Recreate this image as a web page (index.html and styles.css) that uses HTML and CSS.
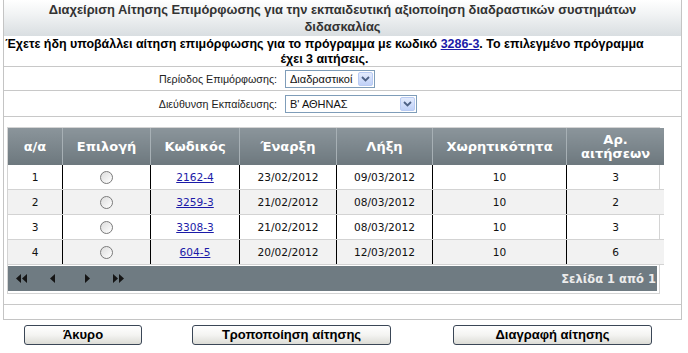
FILE: index.html
```html
<!DOCTYPE html>
<html lang="el">
<head>
<meta charset="utf-8">
<title>Διαχείριση Αίτησης Επιμόρφωσης</title>
<link rel="stylesheet" href="styles.css">
</head>
<body>
<div class="panel">
  <div class="title">Διαχείριση Αίτησης Επιμόρφωσης για την εκπαιδευτική αξιοποίηση διαδραστικών συστημάτων<br>διδασκαλίας</div>
  <div class="msg">Έχετε ήδη υποβάλλει αίτηση επιμόρφωσης για το πρόγραμμα με κωδικό <a href="#" class="link">3286-3</a>. Το επιλεγμένο πρόγραμμα<br>έχει 3 αιτήσεις.</div>
  <div class="frow r1">
    <span class="label">Περίοδος Επιμόρφωσης:</span>
    <span class="select s1"><span class="stext">Διαδραστικοί</span><span class="arrow"><svg width="9" height="6" viewBox="0 0 9 6"><path d="M1 1 L4.5 4.5 L8 1" fill="none" stroke="#4d6185" stroke-width="1.8"/></svg></span></span>
  </div>
  <div class="frow r2">
    <span class="label">Διεύθυνση Εκπαίδευσης:</span>
    <span class="select s2"><span class="stext">Β' ΑΘΗΝΑΣ</span><span class="arrow"><svg width="9" height="6" viewBox="0 0 9 6"><path d="M1 1 L4.5 4.5 L8 1" fill="none" stroke="#4d6185" stroke-width="1.8"/></svg></span></span>
  </div>
  <div class="tablerow">
    <div class="wrap">
      <table class="grid">
        <thead>
          <tr>
            <th class="c1">α/α</th>
            <th class="c2">Επιλογή</th>
            <th class="c3">Κωδικός</th>
            <th class="c4">Έναρξη</th>
            <th class="c5">Λήξη</th>
            <th class="c6">Χωρητικότητα</th>
            <th class="c7">Αρ.<br>αιτήσεων</th>
          </tr>
        </thead>
        <tbody>
          <tr><td>1</td><td><span class="radio"></span></td><td><a href="#" class="dlink">2162-4</a></td><td>23/02/2012</td><td>09/03/2012</td><td>10</td><td>3</td></tr>
          <tr class="alt"><td>2</td><td><span class="radio"></span></td><td><a href="#" class="dlink">3259-3</a></td><td>21/02/2012</td><td>08/03/2012</td><td>10</td><td>2</td></tr>
          <tr><td>3</td><td><span class="radio"></span></td><td><a href="#" class="dlink">3308-3</a></td><td>21/02/2012</td><td>08/03/2012</td><td>10</td><td>3</td></tr>
          <tr class="alt"><td>4</td><td><span class="radio"></span></td><td><a href="#" class="dlink">604-5</a></td><td>20/02/2012</td><td>12/03/2012</td><td>10</td><td>6</td></tr>
        </tbody>
      </table>
      <div class="pager">
        <div class="pnav">
          <svg class="pic p1" width="12" height="9" viewBox="0 0 12 9"><path d="M5 0 L0 4.5 L5 9 Z M11 0 L6 4.5 L11 9 Z" fill="#151515"/></svg>
          <svg class="pic p2" width="6" height="9" viewBox="0 0 6 9"><path d="M5 0 L0 4.5 L5 9 Z" fill="#151515"/></svg>
          <svg class="pic p3" width="6" height="9" viewBox="0 0 6 9"><path d="M1 0 L6 4.5 L1 9 Z" fill="#151515"/></svg>
          <svg class="pic p4" width="12" height="9" viewBox="0 0 12 9"><path d="M1 0 L6 4.5 L1 9 Z M7 0 L12 4.5 L7 9 Z" fill="#151515"/></svg>
        </div>
        <div class="ptext">Σελίδα 1 από 1</div>
      </div>
    </div>
  </div>
  <div class="frow last"></div>
</div>
<div class="buttons">
  <button class="btn b1">Άκυρο</button>
  <button class="btn b2">Τροποποίηση αίτησης</button>
  <button class="btn b3">Διαγραφή αίτησης</button>
</div>
</body>
</html>
```
FILE: styles.css
```css
html, body {
  margin: 0;
  padding: 0;
  background: #ffffff;
}
body {
  font-family: "Liberation Sans", Arial, sans-serif;
  color: #000;
}
.panel {
  margin-left: 3px;
  width: 679px;
  box-sizing: border-box;
  border: 1px solid #c4c4c4;
  border-top: none;
}
.title {
  height: 36px;
  box-sizing: border-box;
  padding-top: 1px;
  text-align: center;
  font-weight: bold;
  font-size: 12.9px;
  line-height: 17px;
  color: #333;
  background: linear-gradient(#ffffff 0%, #f1f3f4 40%, #d9dee1 100%);
  white-space: nowrap;
}
.msg {
  height: 31px;
  box-sizing: border-box;
  text-align: center;
  font-weight: bold;
  font-size: 12.45px;
  line-height: 15px;
  padding-top: 1px;
  padding-right: 36px;
  border-bottom: 1px solid #c8c8c8;
  white-space: nowrap;
}
.link {
  color: #1b1ba8;
  text-decoration: underline;
}
.frow {
  display: flex;
  align-items: center;
  border-bottom: 1px solid #c8c8c8;
  box-sizing: border-box;
}
.r1 { height: 24px; }
.r2 { height: 26px; }
.label {
  width: 281px;
  text-align: right;
  font-size: 10.7px;
  color: #222;
  padding-right: 8px;
  box-sizing: border-box;
  flex: none;
}
.select {
  display: flex;
  align-items: center;
  height: 18px;
  box-sizing: border-box;
  border: 1px solid #7f9db9;
  background: #fff;
  font-size: 11px;
  color: #111;
  justify-content: space-between;
  padding: 0 1px 0 4px;
}
.s1 { width: 90px; }
.s2 { width: 132px; }
.arrow {
  width: 15px;
  height: 14px;
  box-sizing: border-box;
  border: 1px solid #b9cbf3;
  border-radius: 2px;
  background: linear-gradient(#e3ebfd, #c0d1f8);
  display: flex;
  align-items: center;
  justify-content: center;
}
.tablerow {
  padding: 10px 0 10px 3px;
  border-bottom: 1px solid #c8c8c8;
}
.wrap {
  width: 653px;
  box-sizing: border-box;
  border: 1px solid #d4d4d4;
  padding-bottom: 2px;
}
.grid {
  border-collapse: collapse;
  table-layout: fixed;
  width: 650px;
  font-family: "DejaVu Sans", Verdana, sans-serif;
}
.grid th {
  height: 37px;
  padding: 0;
  color: #ffffff;
  font-size: 13px;
  font-weight: bold;
  line-height: 14px;
  background: linear-gradient(#8b959b, #6d787e);
  border-left: 1px solid #a7b0b5;
  text-align: center;
}
.grid th:first-child { border-left: none; }
.c1 { width: 54px; }
.c2 { width: 87px; }
.c3 { width: 88px; }
.c4 { width: 96px; }
.c5 { width: 95px; }
.c6 { width: 133px; }
.c7 { width: 97px; }
.grid td {
  height: 24px;
  padding: 0;
  text-align: center;
  font-size: 10.6px;
  color: #111;
  border-bottom: 1px solid #d3d3d3;
  border-left: 1px solid #000;
}
.grid td:first-child { border-left: none; }
.grid tr.alt td { background: #f2f2f2; }
.dlink {
  color: #1b1ba8;
  text-decoration: underline;
}
.radio {
  display: inline-block;
  width: 11px;
  height: 11px;
  border: 1px solid #7a7a7a;
  border-radius: 50%;
  background: linear-gradient(135deg, #dcdcdc, #ffffff);
  vertical-align: middle;
}
.pager {
  margin-top: 1px;
  height: 25px;
  width: 649px;
  background: #6f7b82;
  display: flex;
  align-items: center;
  justify-content: space-between;
}
.pnav {
  display: flex;
  align-items: center;
  padding-left: 8px;
}
.p1 { margin-right: 22px; }
.p2 { margin-right: 28px; }
.p3 { margin-right: 22px; }
.ptext {
  color: #ececec;
  font-family: "DejaVu Sans", Verdana, sans-serif;
  font-weight: bold;
  font-size: 11.5px;
  padding-right: 1px;
}
.last { height: 14px; border-bottom: none; }
.buttons {
  display: flex;
  margin-top: 5px;
}
.btn {
  height: 20px;
  box-sizing: border-box;
  border: 1px solid #3a4656;
  border-radius: 3px;
  background: linear-gradient(#ffffff 0%, #f4f4f2 50%, #dcdcd6 100%);
  font-family: "Liberation Sans", Arial, sans-serif;
  font-weight: bold;
  font-size: 13px;
  color: #000;
  padding: 0;
  line-height: 16px;
}
.b1 { width: 118px; margin-left: 24px; }
.b2 { width: 199px; margin-left: 50px; }
.b3 { width: 199px; margin-left: 62px; }
```
